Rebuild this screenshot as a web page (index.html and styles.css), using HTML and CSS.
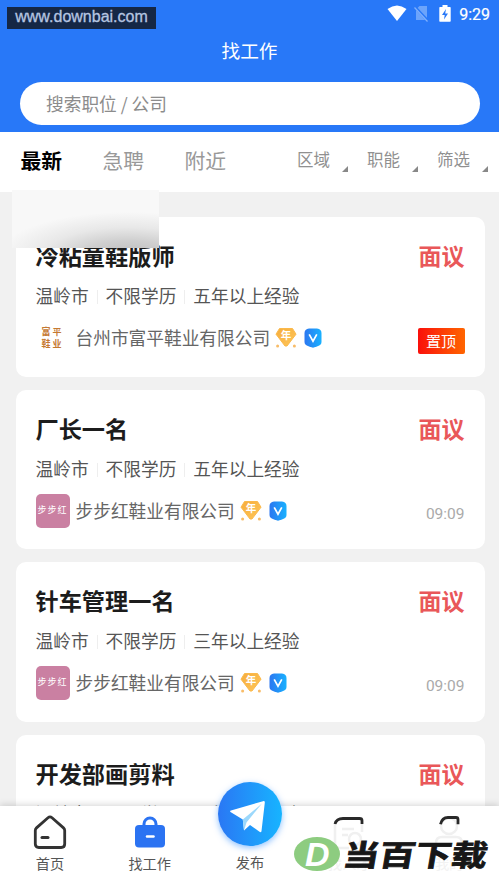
FILE: index.html
```html
<!DOCTYPE html>
<html lang="zh-CN">
<head>
<meta charset="utf-8">
<title>找工作</title>
<link rel="stylesheet" href="styles.css">
</head>
<body>
<svg class="defs" width="0" height="0" aria-hidden="true">
  <defs>
    <linearGradient id="blue" x1="0" y1="0" x2="1" y2="0"><stop stop-color="#2c77f0"/><stop offset="1" stop-color="#19b1ff"/></linearGradient>
    <linearGradient id="gold" x1="0" y1="0" x2="1" y2="1"><stop stop-color="#f5ad3c"/><stop offset="1" stop-color="#ffc65a"/></linearGradient>
    <symbol id="gem" viewBox="0 0 22 20">
      <path d="M4.500 .5h13L21 6.200 12 18h-2L1 6.200z" fill="url(#gold)" stroke="#fbb94b" stroke-linejoin="round"/>
      <circle cx="2.600" cy="18" r="1.500" fill="#f8bc68"/><circle cx="19.400" cy="18" r="1.500" fill="#f8bc68"/>
      <text x="11" y="11.300" text-anchor="middle" class="gem-text">年</text>
    </symbol>
    <symbol id="vip" viewBox="0 0 18 20">
      <path d="M5 .5h8Q17.500 1 17.500 5v9q0 3-4 4.300L9 19.700l-4.500-1.400Q.5 17 .5 14V5Q.5 1 5 .5z" fill="url(#blue)"/>
      <path d="M5.200 6.300 9 13.200l3.800-6.900" fill="none" stroke="#fff" stroke-width="1.700"/>
    </symbol>
  </defs>
</svg>
<div class="app">
  <header class="header">
    <div class="status">
      <span class="site">www.downbai.com</span>
      <span class="status-icons">
        <svg width="20" height="17" viewBox="0 0 20 17"><path d="M.5 4Q10-3 19.500 4L10 16z" fill="#fff"/></svg>
        <svg width="15" height="17" viewBox="0 0 15 17"><path d="M5.500 1H13v14H2V4.500z" fill="#6ca4fb"/><path d="m1 2 13 14" stroke="#2878f8" stroke-width="2.600"/><path d="m.5 2.500 13 14" stroke="#82b1fc" stroke-width="1.200"/></svg>
        <svg width="12" height="17" viewBox="0 0 12 17"><path d="M3.500 0h5v2H11q.7 0 .7.700V16q0 .7-.7.700H1q-.7 0-.7-.700V2.700Q.3 2 1 2h2.500z" fill="#fff"/><path d="M7 4 3 10h2.700L5 14.500 9 8.500H6.200z" fill="#2878f8"/></svg>
      </span>
      <span class="clock">9:29</span>
    </div>
    <h1 class="page-title">找工作</h1>
    <div class="search">搜索职位 / 公司</div>
  </header>
  <nav class="tabs">
    <span class="tab active">最新</span><span class="tab">急聘</span><span class="tab">附近</span>
    <div class="filters"><span class="filter">区域</span><span class="filter">职能</span><span class="filter">筛选</span></div>
  </nav>
  <main class="list">
    <article class="card">
      <div class="row head"><h2>冷粘童鞋版师</h2><span class="pay">面议</span></div>
      <div class="meta"><span>温岭市</span><span>不限学历</span><span>五年以上经验</span></div>
      <div class="row company"><span class="logo plain">富平<br>鞋业</span><span class="name">台州市富平鞋业有限公司</span><svg class="gem"><use href="#gem"/></svg><svg class="vip"><use href="#vip"/></svg><span class="pin">置顶</span></div>
      <div class="mask"></div>
    </article>
    <article class="card">
      <div class="row head"><h2>厂长一名</h2><span class="pay">面议</span></div>
      <div class="meta"><span>温岭市</span><span>不限学历</span><span>五年以上经验</span></div>
      <div class="row company"><span class="logo">步步红</span><span class="name">步步红鞋业有限公司</span><svg class="gem"><use href="#gem"/></svg><svg class="vip"><use href="#vip"/></svg><span class="time">09:09</span></div>
    </article>
    <article class="card">
      <div class="row head"><h2>针车管理一名</h2><span class="pay">面议</span></div>
      <div class="meta"><span>温岭市</span><span>不限学历</span><span>三年以上经验</span></div>
      <div class="row company"><span class="logo">步步红</span><span class="name">步步红鞋业有限公司</span><svg class="gem"><use href="#gem"/></svg><svg class="vip"><use href="#vip"/></svg><span class="time">09:09</span></div>
    </article>
    <article class="card">
      <div class="row head"><h2>开发部画剪料</h2><span class="pay">面议</span></div>
      <div class="meta"><span>温岭市</span><span>不限学历</span><span>五年以上经验</span></div>
    </article>
  </main>
  <nav class="bottom">
    <div class="item">
      <svg width="34" height="36" viewBox="0 0 34 36"><path d="M2.300 15.500Q2.300 14 3.500 12.900L15 2.700q2-1.700 4 0l11.500 10.200q1.200 1.100 1.200 2.600V29q0 3.500-3.500 3.500H5.800q-3.500 0-3.500-3.500z" fill="none" stroke="#333" stroke-width="2.800"/><path d="M9 22.500h6" stroke="#333" stroke-width="3" stroke-linecap="round"/></svg>
      <span>首页</span>
    </div>
    <div class="item">
      <svg width="34" height="36" viewBox="0 0 34 36"><path d="M11 10V9a6 6 0 0 1 12 0v1" fill="none" stroke="#2b73f2" stroke-width="3"/><rect x="2" y="10" width="30" height="22.500" rx="4" fill="#2b73f2"/><path d="M14 21.500h6.500" stroke="#fff" stroke-width="2.500" stroke-linecap="round"/></svg>
      <span>找工作</span>
    </div>
    <div class="item publish">
      <div class="fab"><svg width="64" height="64" viewBox="0 0 64 64"><path d="M12.500 30Q11.500 29 13 28.500L45 19.200q2-.5 1.800 1.500L43.500 49q-.3 2-2 .8L32 43l-6 5.500-1.200-11z" fill="#fff"/><path d="M24.800 37.500 44 21.500 28.500 40.500 26 48.500z" fill="#9cd8fb"/></svg></div>
      <span>发布</span>
    </div>
    <div class="item faded">
      <svg width="34" height="36" viewBox="0 0 34 36"><path d="M3 9v19q0 5 5 5h9M30 9v8M10 14h12M10 20h6M27 29l4 4" fill="none" stroke="#f0f0f0" stroke-width="2.500"/><circle cx="23" cy="24" r="6" fill="none" stroke="#f0f0f0" stroke-width="2.500"/><path d="M3 9q1.500-5.500 8-5.500h16.500q2.500 0 2.500 2V9" fill="none" stroke="#292929" stroke-width="2.800"/></svg>
      <span>找人才</span>
    </div>
    <div class="item faded">
      <svg width="34" height="36" viewBox="0 0 34 36"><circle cx="17" cy="11" r="8" fill="none" stroke="#f0f0f0" stroke-width="2.500"/><path d="M4 33v-5q0-6 6-6h14q6 0 6 6v5" fill="none" stroke="#f0f0f0" stroke-width="2.500"/><path d="M8.500 9.300q1.500-6.800 7.500-6.800h8q2 0 2 2v4.800" fill="none" stroke="#292929" stroke-width="2.800"/></svg>
      <span>我的</span>
    </div>
    <div class="brand"><svg width="46" height="34" viewBox="0 0 46 34"><ellipse cx="23" cy="17" rx="23" ry="17" fill="#8dcc80"/></svg><b>D</b><span class="brand-name">当百下载</span></div>
  </nav>
</div>
</body>
</html>
```
FILE: styles.css
```css
* { box-sizing: border-box; }
body { margin: 0; font-family: "Noto Sans CJK SC", sans-serif; color: #555; }
.defs { position: absolute; }
.app { position: relative; height: 887px; overflow: hidden; background: #f1f1f1; }
.header { height: 132px; background: #2878f8; color: #fff; }
.status { height: 30px; padding: 7px 9px 0 7px; display: flex; align-items: flex-start; }
.site { width: 149px; height: 22px; background: #152745; color: #b5c5e1; font: 16px/20px "Liberation Sans", sans-serif; text-align: center; white-space: nowrap; -webkit-text-stroke: .3px #b5c5e1; }
.status-icons { display: flex; gap: 8px; margin: -2px 0 0 auto; }
.status-icons svg:last-child { margin-left: 2px; }
.status-icons svg:first-child { margin-right: -1px; }
.clock { font: 400 16px/16px Roboto, sans-serif; margin-left: 8px; -webkit-text-stroke: .2px #fff; }
.page-title { margin: 6px 0 0; font-size: 18.700px; line-height: 27px; font-weight: 400; text-align: center; }
.search { margin: 19px 19px 0 20px; height: 43px; border-radius: 22px; padding-left: 26px; background: #fff; color: #8c8c8c; font-size: 17.700px; line-height: 42px; }
.tabs { height: 60px; background: #fff; padding-left: 20.500px; display: flex; }
.tab { width: 82px; font-size: 20.800px; line-height: 56px; color: #999; }
.tab.active { color: #000; font-weight: 700; }
.filters { display: flex; margin-left: auto; width: 202px; }
.filter { flex: none; position: relative; width: 70px; font-size: 16.500px; line-height: 54px; color: #909090; }
.filter::after { content: ""; position: absolute; left: 45px; top: 34px; border-left: 6px solid transparent; border-bottom: 6px solid #888; }
.list { padding: 25px 14.500px 0 15.500px; display: flex; flex-direction: column; gap: 13px; }
.card { position: relative; flex: none; height: 159.500px; border-radius: 10px; background: #fff; padding: 21px 20px 0 20px; }
.row { display: flex; align-items: center; }
.head { height: 34px; justify-content: space-between; }
h2 { margin: 0; color: #1c1c1c; font-size: 23.200px; line-height: 34px; font-weight: 700; }
.pay { color: #e95759; font-size: 23px; line-height: 34px; font-weight: 700; }
.meta { margin-top: 9px; height: 28px; display: flex; font-size: 17.700px; line-height: 28px; color: #555; }
.meta span + span { margin-left: 8px; padding-left: 9px; position: relative; }
.meta span + span::before { content: ""; position: absolute; left: 0; top: 9px; width: 1px; height: 14px; background: #eee; }
.company { margin-top: 12px; height: 34px; }
.logo { width: 34px; height: 34px; border-radius: 5px; background: #ca80a2; color: #fff; font-size: 9px; line-height: 31px; text-align: center; letter-spacing: 1px; white-space: nowrap; flex: none; }
.logo.plain { background: none; color: #c57932; font-size: 9px; line-height: 12px; padding-top: 5px; font-weight: 700; letter-spacing: 2px; }
.name { margin: -2px 0 0 6px; font-size: 17.700px; line-height: 32px; color: #666; }
.gem { width: 22px; height: 20px; margin-left: 5px; }
.vip { width: 18px; height: 20px; margin-left: 7px; }
.gem-text { font-size: 10.500px; font-weight: 700; fill: #fff; }
.time { margin: 6px 0 0 auto; font: 15.500px/18px Roboto, sans-serif; color: #aaa; }
.pin { margin: 6px 0 0 auto; width: 47px; height: 26px; border-radius: 2px; background: linear-gradient(90deg, #fa100b, #ff6500); color: #fff; text-align: center; font-size: 15px; line-height: 25px; }
.mask { position: absolute; left: -3.500px; top: -27px; width: 147px; height: 58px; background: radial-gradient(ellipse 130px 44px at 116px 66px, #bcbcbc 0%, #cfcfcf 35%, rgba(228,228,228,.8) 65%, rgba(247,247,247,0) 100%), #f8f8f8; }
.bottom { position: absolute; left: 0; bottom: 0; width: 100%; height: 81px; background: #fff; display: flex; box-shadow: 0 -1px 7px rgba(0,0,0,.17); }
.item { flex: 1; display: flex; flex-direction: column; align-items: center; padding-top: 9px; font-size: 14.200px; line-height: 20px; color: #555; }
.item svg { display: block; }
.item span { margin-top: 2px; }
.fab { width: 64px; height: 64px; margin: -33px 0 0 1px; border-radius: 50%; background: linear-gradient(90deg, #2a77f4, #17b4ff); box-shadow: 0 2px 6px rgba(35,135,255,.5); }
.publish span { margin: 6px 0 0 1px; }
.faded span { color: #f2f2f2; }
.brand { position: absolute; left: 294px; top: 30px; height: 36px; display: flex; align-items: center; }
.brand b { position: absolute; left: 11px; top: 0; width: 26px; font: italic 700 34px/36px "Liberation Sans", sans-serif; color: #fff; }
.brand-name { margin: -2px 0 0 4px; font-size: 36px; line-height: 36px; font-weight: 700; color: #171717; -webkit-text-stroke: 1px #171717; transform: scaleY(.82) skewX(-8deg); white-space: nowrap; }
```
